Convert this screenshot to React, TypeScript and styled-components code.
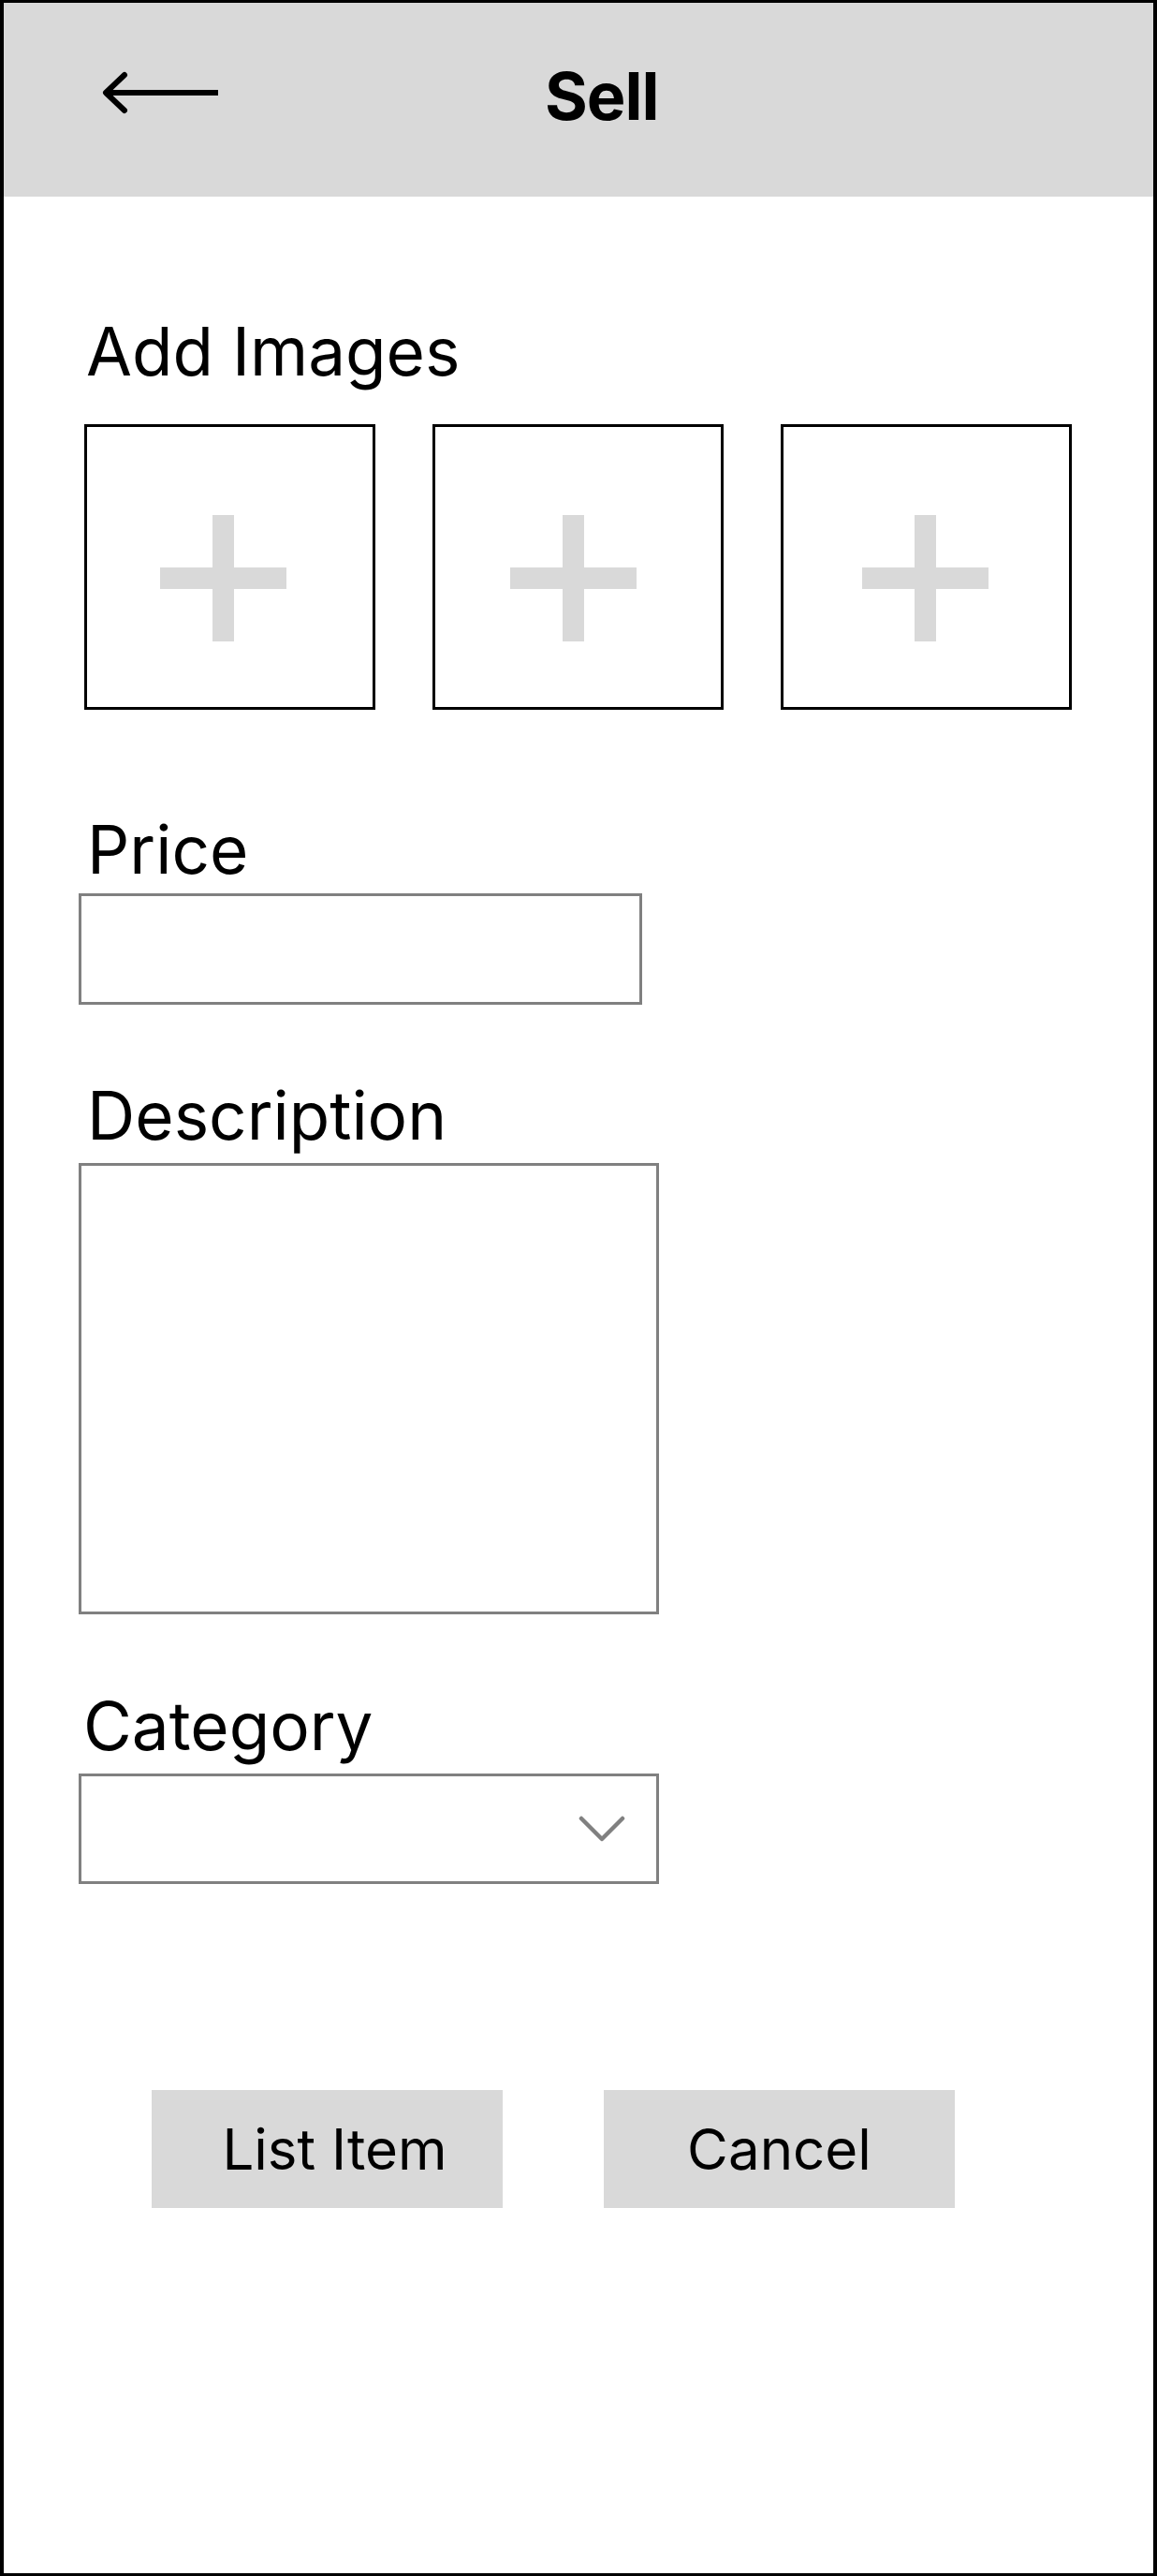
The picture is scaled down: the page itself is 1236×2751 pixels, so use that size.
import React from "react";
import styled, { createGlobalStyle } from "styled-components";

const GlobalStyle = createGlobalStyle`
  html, body { margin: 0; padding: 0; background: #fff; }
  body { font-family: Inter, "Noto Sans", sans-serif; }
  *, *::before, *::after { box-sizing: border-box; }
`;

const Frame = styled.div`
  width: 1236px;
  height: 2751px;
  border-style: solid;
  border-color: #000;
  border-width: 3px 4px;
  background: #fff;
  display: flex;
  flex-direction: column;
  font-family: Inter, "Noto Sans", sans-serif;
  color: #000;
`;

const Header = styled.header`
  height: 207px;
  flex: none;
  background: #d9d9d9;
  display: flex;
  align-items: flex-start;
  padding-left: 103px;
`;

const BackButton = styled.button`
  border: 0;
  padding: 0;
  background: transparent;
  margin-top: 71px;
  width: 128px;
  height: 50px;
  display: block;
  cursor: pointer;
  svg { display: block; }
`;

const Title = styled.h1`
  margin: 65px 0 0 347px;
  font-size: 70px;
  line-height: 1;
  font-weight: 700;
  letter-spacing: -1px;
`;

const Main = styled.main`
  display: flex;
  flex-direction: column;
  align-items: flex-start;
  padding-left: 80px;
`;

const Label = styled.label<{ $top: number; $indent: number }>`
  display: block;
  margin-top: ${(p) => p.$top}px;
  margin-left: ${(p) => p.$indent}px;
  font-size: 71px;
  line-height: 1;
  font-weight: 400;
`;

const ImageRow = styled.div`
  display: grid;
  grid-template-columns: repeat(3, 311px);
  column-gap: 61px;
  margin-top: 42px;
  margin-left: 6px;
`;

const ImageSlot = styled.button<{ $nudge: number }>`
  width: 311px;
  height: 305px;
  border: 3px solid #000;
  background: #fff;
  padding: 24px ${(p) => p.$nudge * 2}px 0 0;
  display: flex;
  align-items: center;
  justify-content: center;
  cursor: pointer;
  svg { display: block; flex: none; }
`;

const TextInput = styled.input`
  margin-top: 11px;
  width: 602px;
  height: 119px;
  border: 3px solid #808080;
  background: #fff;
  outline: none;
  padding: 0 20px;
  font: inherit;
  font-size: 48px;
`;

const TextArea = styled.textarea`
  margin-top: 15px;
  width: 620px;
  height: 482px;
  border: 3px solid #808080;
  background: #fff;
  outline: none;
  resize: none;
  padding: 16px 20px;
  font: inherit;
  font-size: 48px;
  display: block;
`;

const SelectBox = styled.div`
  margin-top: 15px;
  width: 620px;
  height: 118px;
  border: 3px solid #808080;
  background: #fff;
  display: flex;
  align-items: center;
  justify-content: flex-end;
  padding-right: 33px;
  cursor: pointer;
  svg { display: block; }
`;

const ButtonRow = styled.div`
  display: flex;
  gap: 108px;
  margin-top: 220px;
  margin-left: 78px;
`;

const ActionButton = styled.button<{ $shift?: number }>`
  width: 375px;
  height: 126px;
  border: 0;
  background: #d9d9d9;
  display: flex;
  align-items: center;
  justify-content: center;
  padding: 0 0 0 ${(p) => (p.$shift ?? 0) * 2}px;
  font-family: Inter, "Noto Sans", sans-serif;
  font-size: 60px;
  line-height: 1;
  font-weight: 400;
  color: #000;
  cursor: pointer;
`;

const ArrowIcon = () => (
  <svg width="128" height="50" viewBox="0 0 128 50" fill="none">
    <path d="M26 6 L6 25 L26 44" stroke="#000" strokeWidth="6" strokeLinecap="round" strokeLinejoin="round" />
    <path d="M6 25 H126" stroke="#000" strokeWidth="6" />
  </svg>
);

const PlusIcon = () => (
  <svg width="135" height="135" viewBox="0 0 135 135">
    <rect x="56" y="0" width="23" height="135" fill="#d9d9d9" />
    <rect x="0" y="56" width="135" height="23" fill="#d9d9d9" />
  </svg>
);

const ChevronIcon = () => (
  <svg width="50" height="30" viewBox="0 0 50 30" fill="none">
    <path d="M3 4 L25 26 L47 4" stroke="#808080" strokeWidth="4.5" strokeLinecap="round" strokeLinejoin="round" />
  </svg>
);

const slots = [7, 5, 1];

export default function App() {
  return (
    <>
      <GlobalStyle />
      <Frame>
        <Header>
          <BackButton aria-label="Back">
            <ArrowIcon />
          </BackButton>
          <Title>Sell</Title>
        </Header>
        <Main>
          <Label $top={130} $indent={8}>Add Images</Label>
          <ImageRow>
            {slots.map((n, i) => (
              <ImageSlot key={i} $nudge={n} aria-label={`Add image ${i + 1}`}>
                <PlusIcon />
              </ImageSlot>
            ))}
          </ImageRow>

          <Label $top={114} $indent={9}>Price</Label>
          <TextInput type="text" aria-label="Price" />

          <Label $top={83} $indent={9}>Description</Label>
          <TextArea aria-label="Description" />

          <Label $top={84} $indent={5}>Category</Label>
          <SelectBox role="combobox" aria-label="Category">
            <ChevronIcon />
          </SelectBox>

          <ButtonRow>
            <ActionButton $shift={8}>List Item</ActionButton>
            <ActionButton>Cancel</ActionButton>
          </ButtonRow>
        </Main>
      </Frame>
    </>
  );
}
